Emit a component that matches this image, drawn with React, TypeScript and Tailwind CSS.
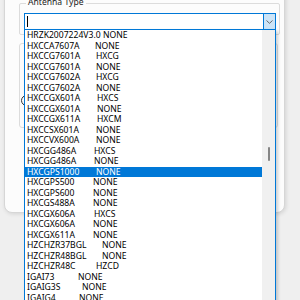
import React from "react";

type Row = { name: string; val: string; w: string };

const rows: Row[] = [
  { name: "HXCCA7607A", val: "NONE", w: "w-[68px]" },
  { name: "HXCCG7601A", val: "HXCG", w: "w-[69px]" },
  { name: "HXCCG7601A", val: "NONE", w: "w-[69px]" },
  { name: "HXCCG7602A", val: "HXCG", w: "w-[69px]" },
  { name: "HXCCG7602A", val: "NONE", w: "w-[69px]" },
  { name: "HXCCGX601A", val: "HXCS", w: "w-[70px]" },
  { name: "HXCCGX601A", val: "NONE", w: "w-[70px]" },
  { name: "HXCCGX611A", val: "HXCM", w: "w-[70px]" },
  { name: "HXCCSX601A", val: "NONE", w: "w-[69px]" },
  { name: "HXCCVX600A", val: "NONE", w: "w-[69px]" },
  { name: "HXCGG486A", val: "HXCS", w: "w-[67px]" },
  { name: "HXCGG486A", val: "NONE", w: "w-[67px]" },
  { name: "HXCGPS1000", val: "NONE", w: "w-[69px]" },
  { name: "HXCGPS500", val: "NONE", w: "w-[66px]" },
  { name: "HXCGPS600", val: "NONE", w: "w-[66px]" },
  { name: "HXCGS488A", val: "NONE", w: "w-[66px]" },
  { name: "HXCGX606A", val: "HXCS", w: "w-[67px]" },
  { name: "HXCGX606A", val: "NONE", w: "w-[66px]" },
  { name: "HXCGX611A", val: "NONE", w: "w-[66px]" },
  { name: "HZCHZR37BGL", val: "NONE", w: "w-[75px]" },
  { name: "HZCHZR48BGL", val: "NONE", w: "w-[75px]" },
  { name: "HZCHZR48C", val: "HZCD", w: "w-[69px]" },
  { name: "IGAI73", val: "NONE", w: "w-[51px]" },
  { name: "IGAIG3S", val: "NONE", w: "w-[55px]" },
  { name: "IGAIG4", val: "NONE", w: "w-[52px]" },
  { name: "IGAIG5", val: "NONE", w: "w-[52px]" },
];

export default function App() {
  return (
    <div className="relative w-[300px] h-[300px] overflow-hidden bg-[#efefef] font-['Noto_Sans','Liberation_Sans',sans-serif] text-[8.6px] leading-[10.5px] text-black">
      {/* dialog card */}
      <div className="ml-[4px] mt-[-10px] w-[281px] h-[223px] bg-[#fcfcfc] border border-[#d6d6d6] rounded-b-[8px] shadow-[1px_1px_4px_rgba(0,0,0,0.12)] pl-[14px] pt-[12px]">
        {/* group box 1 */}
        <div className="relative w-[261px] h-[32px] border border-[#dcdcdc] rounded-[2px]">
          <div className="absolute left-[6px] top-[-7px] px-[2px] bg-[#fcfcfc] text-[#222]">Antenna Type</div>
          <div className="ml-[4px] mt-[9px] w-[252px] h-[17px] border border-[#0078d7] bg-white flex">
            <div className="flex-1 flex items-center pl-[2px]">
              <div className="w-px h-[11px] bg-black" />
            </div>
            <div className="w-[12px] h-full bg-[#cce4f7] border-l border-[#0078d7] flex items-center justify-center">
              <svg width="7" height="4" viewBox="0 0 7 4">
                <polyline points="0.5,0.5 3.5,3.3 6.5,0.5" fill="none" stroke="#5a5a5a" strokeWidth="0.9" />
              </svg>
            </div>
          </div>
        </div>
        {/* group box 2 */}
        <div className="mt-[8px] w-[259px] h-[85px] border border-[#dcdcdc] rounded-[3px]">
          <div className="ml-[1px] mt-[51px] w-[11px] h-[11px] rounded-full border border-[#333]" />
        </div>
      </div>

      {/* dropdown list overlay */}
      <div className="absolute left-[24px] top-[29px] w-[252px] h-[290px] border border-[#0078d7] bg-white flex shadow-[2px_2px_3px_rgba(0,0,0,0.18)]">
        <div className="flex-1 flex flex-col whitespace-nowrap">
          <div className="h-[10.5px] pl-[2px]">HRZK2007224V3.0 NONE</div>
          {rows.map((r, i) => (
            <div
              key={i}
              className={
                i === 12
                  ? "h-[10.5px] pl-[2px] flex bg-[#0078d7] text-white"
                  : "h-[10.5px] pl-[2px] flex"
              }
            >
              <span className={r.w}>{r.name}</span>
              <span>{r.val}</span>
            </div>
          ))}
        </div>
        <div className="w-[13px] h-full bg-[#f0f0f0] pl-[6px] pt-[117px]">
          <div className="w-[2px] h-[14px] bg-[#858585] rounded-full" />
        </div>
      </div>
    </div>
  );
}
